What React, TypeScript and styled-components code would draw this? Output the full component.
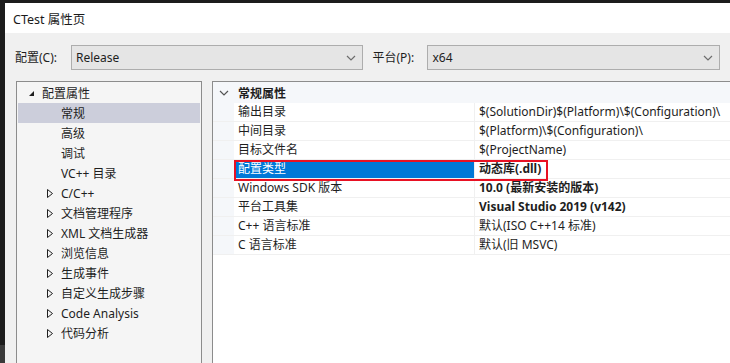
import React from 'react';
import styled, { createGlobalStyle } from 'styled-components';

const GlobalStyle = createGlobalStyle`
  html, body {
    margin: 0;
    padding: 0;
    background: #1c1c1c;
    overflow: hidden;
  }
  body {
    font-family: "Noto Sans", "Noto Sans CJK SC", sans-serif;
    font-size: 12px;
    color: #1e1e1e;
  }
`;

const Screen = styled.div`
  width: 730px;
  height: 363px;
  display: flex;
  padding-top: 3px;
  box-sizing: border-box;
`;

const SideStrip = styled.div`
  width: 5px;
  background: linear-gradient(#1c1c1c 0, #1c1c1c 342px, #3a3a3a 342px);
`;

const Window = styled.div`
  flex: 1;
  display: flex;
  flex-direction: column;
  background: #f0f0f0;
  overflow: hidden;
`;

const TitleBar = styled.div`
  height: 30px;
  background: #ffffff;
  display: flex;
  align-items: center;
  padding-left: 8px;
  font-size: 12.5px;
  color: #1a1a1a;
`;

const Toolbar = styled.div`
  height: 48px;
  display: flex;
  align-items: flex-start;
  padding: 12px 0 0 10px;
  box-sizing: border-box;
`;

const FieldLabel = styled.div<{ $w: number }>`
  width: ${p => p.$w}px;
  height: 25px;
  line-height: 25px;
  font-size: 12px;
`;

const Combo = styled.div<{ $w: number }>`
  width: ${p => p.$w}px;
  height: 25px;
  box-sizing: border-box;
  border: 1px solid #adadad;
  background: #e5e5e5;
  display: flex;
  align-items: center;
  justify-content: space-between;
  padding: 0 6px 0 4px;
  margin-right: 10px;
  font-size: 12px;
`;

const Body = styled.div`
  flex: 1;
  display: flex;
  padding-left: 11px;
  gap: 10px;
`;

const TreePanel = styled.div`
  width: 186px;
  box-sizing: border-box;
  border: 1px solid #8c8c8c;
  border-bottom: none;
  background: #f5f5f5;
  padding: 1px 1px 0;
`;

const TreeRow = styled.div<{ $indent: number; $selected?: boolean }>`
  height: 20px;
  display: flex;
  align-items: center;
  padding-left: ${p => p.$indent}px;
  background: ${p => (p.$selected ? '#cccedb' : 'transparent')};
  white-space: nowrap;
`;

const Toggle = styled.span`
  width: 14px;
  display: inline-flex;
  align-items: center;
`;

const GridPanel = styled.div`
  flex: 1;
  border-left: 1px solid #8c8c8c;
  border-top: 1px solid #8c8c8c;
  background: #ffffff;
  position: relative;
`;

const CategoryRow = styled.div`
  height: 21px;
  display: flex;
  align-items: center;
  background: #f5f7fa;
  font-weight: bold;
`;

const Margin = styled.div`
  width: 21px;
  align-self: stretch;
  display: flex;
  align-items: center;
  justify-content: center;
  background: #f5f7fa;
`;

const PropRow = styled.div`
  height: 19px;
  display: flex;
  box-sizing: border-box;
  border-bottom: 1px solid #f0f0f0;
`;

const NameCell = styled.div<{ $selected?: boolean }>`
  width: 241px;
  box-sizing: border-box;
  padding-left: 4px;
  line-height: 18px;
  border-right: 1px solid #f0f0f0;
  background: ${p => (p.$selected ? '#0078d7' : 'transparent')};
  color: ${p => (p.$selected ? '#ffffff' : '#1e1e1e')};
  white-space: nowrap;
`;

const ValueCell = styled.div<{ $bold?: boolean }>`
  flex: 1;
  padding-left: 4px;
  line-height: 18px;
  font-weight: ${p => (p.$bold ? 'bold' : 'normal')};
  white-space: nowrap;
  overflow: hidden;
`;

const CategoryText = styled.span`
  padding-left: 4px;
`;

const Highlight = styled.div`
  position: absolute;
  left: 21px;
  top: 78px;
  width: 314px;
  height: 21px;
  box-sizing: border-box;
  border: 2.5px solid #e81123;
  pointer-events: none;
`;

const ChevronDown = ({ color = '#6d6d6d' }: { color?: string }) => (
  <svg width="10" height="6" viewBox="0 0 10 6">
    <path d="M1 1 L5 5 L9 1" fill="none" stroke={color} strokeWidth="1.2" />
  </svg>
);

const Expanded = () => (
  <svg width="7" height="7" viewBox="0 0 7 7">
    <path d="M6 1 L6 6 L1 6 Z" fill="#1e1e1e" />
  </svg>
);

const Collapsed = () => (
  <svg width="6" height="9" viewBox="0 0 6 9">
    <path d="M0.5 0.5 L5.5 4.5 L0.5 8.5 Z" fill="none" stroke="#1e1e1e" strokeWidth="1" />
  </svg>
);

const treeItems: { text: string; kind: 'leaf' | 'closed' }[] = [
  { text: '高级', kind: 'leaf' },
  { text: '调试', kind: 'leaf' },
  { text: 'VC++ 目录', kind: 'leaf' },
  { text: 'C/C++', kind: 'closed' },
  { text: '文档管理程序', kind: 'closed' },
  { text: 'XML 文档生成器', kind: 'closed' },
  { text: '浏览信息', kind: 'closed' },
  { text: '生成事件', kind: 'closed' },
  { text: '自定义生成步骤', kind: 'closed' },
  { text: 'Code Analysis', kind: 'closed' },
  { text: '代码分析', kind: 'closed' },
];

const props: { name: string; value: string; bold?: boolean; selected?: boolean }[] = [
  { name: '输出目录', value: '$(SolutionDir)$(Platform)\\$(Configuration)\\' },
  { name: '中间目录', value: '$(Platform)\\$(Configuration)\\' },
  { name: '目标文件名', value: '$(ProjectName)' },
  { name: '配置类型', value: '动态库(.dll)', bold: true, selected: true },
  { name: 'Windows SDK 版本', value: '10.0 (最新安装的版本)', bold: true },
  { name: '平台工具集', value: 'Visual Studio 2019 (v142)', bold: true },
  { name: 'C++ 语言标准', value: '默认(ISO C++14 标准)' },
  { name: 'C 语言标准', value: '默认(旧 MSVC)' },
];

export default function App() {
  return (
    <Screen>
      <GlobalStyle />
      <SideStrip />
      <Window>
        <TitleBar>CTest 属性页</TitleBar>
        <Toolbar>
          <FieldLabel $w={56}>配置(C):</FieldLabel>
          <Combo $w={292}>
            <span>Release</span>
            <ChevronDown />
          </Combo>
          <FieldLabel $w={55}>平台(P):</FieldLabel>
          <Combo $w={293}>
            <span>x64</span>
            <ChevronDown />
          </Combo>
        </Toolbar>
        <Body>
          <TreePanel>
            <TreeRow $indent={10}>
              <Toggle><Expanded /></Toggle>
              配置属性
            </TreeRow>
            <TreeRow $indent={43} $selected>常规</TreeRow>
            {treeItems.map((item, i) =>
              item.kind === 'leaf' ? (
                <TreeRow key={i} $indent={43}>{item.text}</TreeRow>
              ) : (
                <TreeRow key={i} $indent={29}>
                  <Toggle><Collapsed /></Toggle>
                  {item.text}
                </TreeRow>
              )
            )}
          </TreePanel>
          <GridPanel>
            <CategoryRow>
              <Margin><ChevronDown color="#555" /></Margin>
              <CategoryText>常规属性</CategoryText>
            </CategoryRow>
            {props.map((p, i) => (
              <PropRow key={i}>
                <Margin />
                <NameCell $selected={p.selected}>{p.name}</NameCell>
                <ValueCell $bold={p.bold}>{p.value}</ValueCell>
              </PropRow>
            ))}
            <Highlight />
          </GridPanel>
        </Body>
      </Window>
    </Screen>
  );
}
